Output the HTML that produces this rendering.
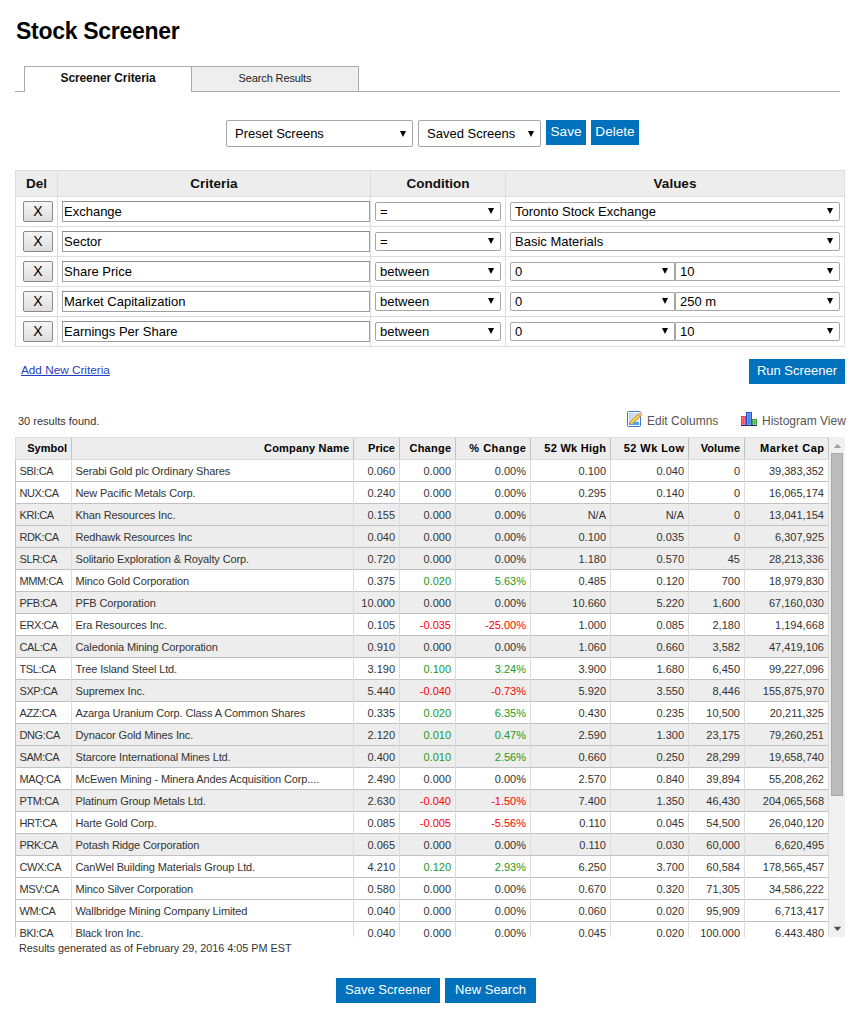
<!DOCTYPE html>
<html><head><meta charset="utf-8">
<style>
*{box-sizing:border-box}
html,body{margin:0;padding:0;background:#fff;width:866px;height:1022px;overflow:hidden;position:relative;font-family:"Liberation Sans",sans-serif}
.a{position:absolute}
h1{position:absolute;left:16px;top:18px;margin:0;font-size:23px;font-weight:bold;color:#000;line-height:26px;letter-spacing:-0.3px}
.tabline{left:15px;top:91px;width:825px;height:1px;background:#aaa}
.tab1{left:24px;top:66px;width:168px;height:26px;border:1px solid #aaa;border-bottom:none;background:#fff;font-size:12px;letter-spacing:-0.1px;font-weight:bold;text-align:center;line-height:22px;color:#111}
.tab2{left:191px;top:66px;width:168px;height:26px;border:1px solid #aaa;background:#eee;font-size:11px;letter-spacing:-0.12px;text-align:center;line-height:22px;color:#222}
.sel{position:absolute;border:1px solid #a6a6a6;border-radius:2px;background:#fff;font-size:13px;color:#000;white-space:nowrap;overflow:hidden}
.sel .arr{position:absolute;width:0;height:0;border-left:3.5px solid transparent;border-right:3.5px solid transparent;border-top:6px solid #000}
.btn{position:absolute;background:#0071bc;color:#fff;font-size:13px;text-align:center;white-space:nowrap}
.ct{border:1px solid #ddd;background:#fff}
.cth{background:#ededed;border-bottom:1px solid #ddd;height:26px}
.cvl{width:1px;background:#ddd}
.chl{left:16px;width:828px;height:1px;background:#ddd}
.chd{top:171px;height:25px;line-height:26px;text-align:center;font-size:13.5px;font-weight:bold;color:#111}
.xb{left:23px;width:30px;height:21px;border:1px solid #8a8a8a;border-radius:2px;background:linear-gradient(#f6f6f6,#dddddd);font-size:14px;text-align:center;line-height:19px;color:#000}
.inp{left:62px;width:308px;height:21px;border:1px solid #a0a0a0;border-top-color:#8c8c8c;background:#fff;font-size:13px;line-height:19px;padding-left:1px;color:#000}
.cs{height:19px;line-height:17px;padding-left:4px}
.cs .arr{top:5px}
.rt{left:15px;top:437px;width:814px;height:500px;overflow:hidden;font-size:11px;color:#333}
.rh{left:0;top:0;width:814px;height:23px;background:#ededed;border-top:1px solid #dcdcdc;border-left:1px solid #dcdcdc;border-bottom:1px solid #d9d9d9}
.hc{top:1px;height:21px;line-height:21px;font-weight:bold;color:#000;text-align:right;padding-right:4px;white-space:nowrap}
.hvl{top:1px;width:1px;height:21px;background:#c2c2c2}
.rw{left:0;width:814px;height:22px;border-bottom:1px solid #c1c1c1;background:#fff}
.blb{left:0;top:23px;width:1px;height:480px;background:#c4c4c4}
.rw.g{background:#ededed}
.c{top:1px;height:21px;line-height:21px;white-space:nowrap;overflow:hidden;padding:0 4px}
.c.tl{padding-left:3.5px}
.sym{letter-spacing:-0.4px}.nm{letter-spacing:-0.12px}
.tl{text-align:left}.tr{text-align:right}
.gr{color:#229922}.rd{color:#ff0000}
.bvl{top:23px;width:1px;height:480px;background:#dcdcdc}
.sb{left:829px;top:437px;width:16px;height:500px;background:#f0f0f0}
.sbu{left:5px;top:7px;width:0;height:0;border-left:3.7px solid transparent;border-right:3.7px solid transparent;border-bottom:4px solid #a0a0a0}
.sbt{left:2px;top:16px;width:12px;height:343px;background:#bcbcbc;border:1px solid #a8a8a8}
.sbd{left:5px;top:490px;width:0;height:0;border-left:3.7px solid transparent;border-right:3.7px solid transparent;border-top:4px solid #505050}
.lnk{left:21px;top:363px;font-size:11.75px;color:#1f3fbf;text-decoration:underline;white-space:nowrap}
.inf{font-size:11px;color:#333;white-space:nowrap}
.tool{font-size:12px;color:#555;white-space:nowrap}
</style></head><body>
<h1>Stock Screener</h1>
<div class="a tabline"></div>
<div class="a tab1">Screener Criteria</div>
<div class="a tab2">Search Results</div>

<div class="sel" style="left:226px;top:120px;width:187px;height:27px;line-height:25px;padding-left:8px">Preset Screens<div class="arr" style="left:173px;top:10px"></div></div>
<div class="sel" style="left:418px;top:120px;width:123px;height:27px;line-height:25px;padding-left:8px">Saved Screens<div class="arr" style="left:109px;top:10px"></div></div>
<div class="btn" style="left:546px;top:120px;width:40px;height:25px;line-height:24px;font-size:13.6px">Save</div>
<div class="btn" style="left:591px;top:120px;width:48px;height:25px;line-height:24px;font-size:13.6px">Delete</div>

<div class="a ct" style="left:15px;top:170px;width:830px;height:177px"></div>
<div class="a cth" style="left:16px;top:171px;width:828px"></div>
<div class="a cvl" style="left:57px;top:171px;height:175px"></div>
<div class="a cvl" style="left:370px;top:171px;height:175px"></div>
<div class="a cvl" style="left:505px;top:171px;height:175px"></div>
<div class="a chl" style="top:226px"></div>
<div class="a chl" style="top:256px"></div>
<div class="a chl" style="top:286px"></div>
<div class="a chl" style="top:316px"></div>
<div class="a chd" style="left:16px;width:41px">Del</div>
<div class="a chd" style="left:58px;width:312px">Criteria</div>
<div class="a chd" style="left:371px;width:134px">Condition</div>
<div class="a chd" style="left:506px;width:338px">Values</div>
<div class="a xb" style="top:201px">X</div>
<div class="a inp" style="top:201px">Exchange</div>
<div class="sel cs" style="left:375px;top:202px;width:126px">=<div class="arr" style="left:112px"></div></div>
<div class="sel cs" style="left:510px;top:202px;width:330px">Toronto Stock Exchange<div class="arr" style="left:316px"></div></div>
<div class="a xb" style="top:231px">X</div>
<div class="a inp" style="top:231px">Sector</div>
<div class="sel cs" style="left:375px;top:232px;width:126px">=<div class="arr" style="left:112px"></div></div>
<div class="sel cs" style="left:510px;top:232px;width:330px">Basic Materials<div class="arr" style="left:316px"></div></div>
<div class="a xb" style="top:261px">X</div>
<div class="a inp" style="top:261px">Share Price</div>
<div class="sel cs" style="left:375px;top:262px;width:126px">between<div class="arr" style="left:112px"></div></div>
<div class="sel cs" style="left:510px;top:262px;width:165px;border-radius:2px 0 0 2px">0<div class="arr" style="left:151px"></div></div>
<div class="sel cs" style="left:675px;top:262px;width:165px;border-radius:0 2px 2px 0">10<div class="arr" style="left:151px"></div></div>
<div class="a xb" style="top:291px">X</div>
<div class="a inp" style="top:291px">Market Capitalization</div>
<div class="sel cs" style="left:375px;top:292px;width:126px">between<div class="arr" style="left:112px"></div></div>
<div class="sel cs" style="left:510px;top:292px;width:165px;border-radius:2px 0 0 2px">0<div class="arr" style="left:151px"></div></div>
<div class="sel cs" style="left:675px;top:292px;width:165px;border-radius:0 2px 2px 0">250 m<div class="arr" style="left:151px"></div></div>
<div class="a xb" style="top:321px">X</div>
<div class="a inp" style="top:321px">Earnings Per Share</div>
<div class="sel cs" style="left:375px;top:322px;width:126px">between<div class="arr" style="left:112px"></div></div>
<div class="sel cs" style="left:510px;top:322px;width:165px;border-radius:2px 0 0 2px">0<div class="arr" style="left:151px"></div></div>
<div class="sel cs" style="left:675px;top:322px;width:165px;border-radius:0 2px 2px 0">10<div class="arr" style="left:151px"></div></div>

<div class="a lnk">Add New Criteria</div>
<div class="btn" style="left:749px;top:359px;width:96px;height:25px;line-height:24px">Run Screener</div>
<div class="a inf" style="left:18px;top:415px">30 results found.</div>
<svg class="a" style="left:626px;top:410px" width="18" height="18" viewBox="0 0 18 18">
<defs><linearGradient id="dg" x1="0" y1="0" x2="1" y2="1"><stop offset="0" stop-color="#b9d2f6"/><stop offset="1" stop-color="#e8f1fd"/></linearGradient></defs>
<rect x="1.5" y="1.5" width="13" height="15" rx="1" fill="#fff" stroke="#3f76d2" stroke-width="1"/>
<rect x="3" y="3" width="10" height="12" fill="url(#dg)"/>
<rect x="3" y="12" width="10" height="3" fill="#4aa6ef"/>
<line x1="5.2" y1="12.8" x2="14" y2="4.6" stroke="#cf9236" stroke-width="3.8"/>
<line x1="5.6" y1="12.4" x2="13.6" y2="5" stroke="#f0d040" stroke-width="2.2"/>
<line x1="7" y1="11" x2="12.4" y2="6" stroke="#fff8c0" stroke-width="0.7" stroke-dasharray="1 1"/>
<circle cx="14.3" cy="4.4" r="1.7" fill="#f3c89a" stroke="#d09040" stroke-width="0.6"/>
<polygon points="3.6,14.4 4.2,11.4 6.8,13.8" fill="#f7d8b0"/>
<polygon points="3.6,14.4 4.0,12.9 5.2,14.0" fill="#5a3010"/>
</svg>
<div class="a tool" style="left:647px;top:414px">Edit Columns</div>
<svg class="a" style="left:741px;top:412px" width="16" height="14" viewBox="0 0 16 14">
<rect x="0.5" y="4.5" width="4" height="9" fill="#ff9c9c" stroke="#ef3c3c"/>
<rect x="1.5" y="5.5" width="2" height="7" fill="#ff4a4a"/>
<rect x="5.5" y="0.5" width="5" height="13" fill="#8fb6f2" stroke="#1f4fe0"/>
<rect x="6.5" y="1.5" width="3" height="11" fill="#4a86e4"/>
<rect x="11.5" y="7.5" width="4" height="6" fill="#b2e0a4" stroke="#3e9a3e"/>
<rect x="12.5" y="8.5" width="2" height="4" fill="#5aaa5a"/>
<rect x="0" y="13" width="16" height="1" fill="#1a2a7a"/>
</svg>
<div class="a tool" style="left:762px;top:414px">Histogram View</div>
<div class="a rt">
<div class="a rh"></div>
<div class="a hc" style="left:1px;width:55px">Symbol</div>
<div class="a hc" style="left:57px;width:281px;letter-spacing:0.16px;padding-right:3.84px">Company Name</div>
<div class="a hc" style="left:339px;width:45px">Price</div>
<div class="a hc" style="left:385px;width:55px;letter-spacing:0.24px;padding-right:3.76px">Change</div>
<div class="a hc" style="left:441px;width:74px;letter-spacing:0.5px;padding-right:3.50px">% Change</div>
<div class="a hc" style="left:516px;width:79px;letter-spacing:0.27px;padding-right:3.73px">52 Wk High</div>
<div class="a hc" style="left:596px;width:77px;letter-spacing:0.42px;padding-right:3.58px">52 Wk Low</div>
<div class="a hc" style="left:674px;width:55px;letter-spacing:0.08px;padding-right:3.92px">Volume</div>
<div class="a hc" style="left:730px;width:83px;letter-spacing:0.52px;padding-right:3.48px">Market Cap</div>
<div class="a hvl" style="left:56px"></div>
<div class="a hvl" style="left:338px"></div>
<div class="a hvl" style="left:384px"></div>
<div class="a hvl" style="left:440px"></div>
<div class="a hvl" style="left:515px"></div>
<div class="a hvl" style="left:595px"></div>
<div class="a hvl" style="left:673px"></div>
<div class="a hvl" style="left:729px"></div>
<div class="a hvl" style="left:813px"></div>
<div class="a rw" style="top:23px">
<div class="a c tl sym" style="left:1px;width:55px">SBI:CA</div>
<div class="a c tl nm" style="left:57px;width:281px">Serabi Gold plc Ordinary Shares</div>
<div class="a c tr" style="left:339px;width:45px">0.060</div>
<div class="a c tr" style="left:385px;width:55px">0.000</div>
<div class="a c tr" style="left:441px;width:74px">0.00%</div>
<div class="a c tr" style="left:516px;width:79px">0.100</div>
<div class="a c tr" style="left:596px;width:77px">0.040</div>
<div class="a c tr" style="left:674px;width:55px">0</div>
<div class="a c tr" style="left:730px;width:83px">39,383,352</div>
</div>
<div class="a rw" style="top:45px">
<div class="a c tl sym" style="left:1px;width:55px">NUX:CA</div>
<div class="a c tl nm" style="left:57px;width:281px">New Pacific Metals Corp.</div>
<div class="a c tr" style="left:339px;width:45px">0.240</div>
<div class="a c tr" style="left:385px;width:55px">0.000</div>
<div class="a c tr" style="left:441px;width:74px">0.00%</div>
<div class="a c tr" style="left:516px;width:79px">0.295</div>
<div class="a c tr" style="left:596px;width:77px">0.140</div>
<div class="a c tr" style="left:674px;width:55px">0</div>
<div class="a c tr" style="left:730px;width:83px">16,065,174</div>
</div>
<div class="a rw g" style="top:67px">
<div class="a c tl sym" style="left:1px;width:55px">KRI:CA</div>
<div class="a c tl nm" style="left:57px;width:281px">Khan Resources Inc.</div>
<div class="a c tr" style="left:339px;width:45px">0.155</div>
<div class="a c tr" style="left:385px;width:55px">0.000</div>
<div class="a c tr" style="left:441px;width:74px">0.00%</div>
<div class="a c tr" style="left:516px;width:79px">N/A</div>
<div class="a c tr" style="left:596px;width:77px">N/A</div>
<div class="a c tr" style="left:674px;width:55px">0</div>
<div class="a c tr" style="left:730px;width:83px">13,041,154</div>
</div>
<div class="a rw g" style="top:89px">
<div class="a c tl sym" style="left:1px;width:55px">RDK:CA</div>
<div class="a c tl nm" style="left:57px;width:281px">Redhawk Resources Inc</div>
<div class="a c tr" style="left:339px;width:45px">0.040</div>
<div class="a c tr" style="left:385px;width:55px">0.000</div>
<div class="a c tr" style="left:441px;width:74px">0.00%</div>
<div class="a c tr" style="left:516px;width:79px">0.100</div>
<div class="a c tr" style="left:596px;width:77px">0.035</div>
<div class="a c tr" style="left:674px;width:55px">0</div>
<div class="a c tr" style="left:730px;width:83px">6,307,925</div>
</div>
<div class="a rw g" style="top:111px">
<div class="a c tl sym" style="left:1px;width:55px">SLR:CA</div>
<div class="a c tl nm" style="left:57px;width:281px">Solitario Exploration &amp; Royalty Corp.</div>
<div class="a c tr" style="left:339px;width:45px">0.720</div>
<div class="a c tr" style="left:385px;width:55px">0.000</div>
<div class="a c tr" style="left:441px;width:74px">0.00%</div>
<div class="a c tr" style="left:516px;width:79px">1.180</div>
<div class="a c tr" style="left:596px;width:77px">0.570</div>
<div class="a c tr" style="left:674px;width:55px">45</div>
<div class="a c tr" style="left:730px;width:83px">28,213,336</div>
</div>
<div class="a rw" style="top:133px">
<div class="a c tl sym" style="left:1px;width:55px">MMM:CA</div>
<div class="a c tl nm" style="left:57px;width:281px">Minco Gold Corporation</div>
<div class="a c tr" style="left:339px;width:45px">0.375</div>
<div class="a c tr gr" style="left:385px;width:55px">0.020</div>
<div class="a c tr gr" style="left:441px;width:74px">5.63%</div>
<div class="a c tr" style="left:516px;width:79px">0.485</div>
<div class="a c tr" style="left:596px;width:77px">0.120</div>
<div class="a c tr" style="left:674px;width:55px">700</div>
<div class="a c tr" style="left:730px;width:83px">18,979,830</div>
</div>
<div class="a rw g" style="top:155px">
<div class="a c tl sym" style="left:1px;width:55px">PFB:CA</div>
<div class="a c tl nm" style="left:57px;width:281px">PFB Corporation</div>
<div class="a c tr" style="left:339px;width:45px">10.000</div>
<div class="a c tr" style="left:385px;width:55px">0.000</div>
<div class="a c tr" style="left:441px;width:74px">0.00%</div>
<div class="a c tr" style="left:516px;width:79px">10.660</div>
<div class="a c tr" style="left:596px;width:77px">5.220</div>
<div class="a c tr" style="left:674px;width:55px">1,600</div>
<div class="a c tr" style="left:730px;width:83px">67,160,030</div>
</div>
<div class="a rw" style="top:177px">
<div class="a c tl sym" style="left:1px;width:55px">ERX:CA</div>
<div class="a c tl nm" style="left:57px;width:281px">Era Resources Inc.</div>
<div class="a c tr" style="left:339px;width:45px">0.105</div>
<div class="a c tr rd" style="left:385px;width:55px">-0.035</div>
<div class="a c tr rd" style="left:441px;width:74px">-25.00%</div>
<div class="a c tr" style="left:516px;width:79px">1.000</div>
<div class="a c tr" style="left:596px;width:77px">0.085</div>
<div class="a c tr" style="left:674px;width:55px">2,180</div>
<div class="a c tr" style="left:730px;width:83px">1,194,668</div>
</div>
<div class="a rw g" style="top:199px">
<div class="a c tl sym" style="left:1px;width:55px">CAL:CA</div>
<div class="a c tl nm" style="left:57px;width:281px">Caledonia Mining Corporation</div>
<div class="a c tr" style="left:339px;width:45px">0.910</div>
<div class="a c tr" style="left:385px;width:55px">0.000</div>
<div class="a c tr" style="left:441px;width:74px">0.00%</div>
<div class="a c tr" style="left:516px;width:79px">1.060</div>
<div class="a c tr" style="left:596px;width:77px">0.660</div>
<div class="a c tr" style="left:674px;width:55px">3,582</div>
<div class="a c tr" style="left:730px;width:83px">47,419,106</div>
</div>
<div class="a rw" style="top:221px">
<div class="a c tl sym" style="left:1px;width:55px">TSL:CA</div>
<div class="a c tl nm" style="left:57px;width:281px">Tree Island Steel Ltd.</div>
<div class="a c tr" style="left:339px;width:45px">3.190</div>
<div class="a c tr gr" style="left:385px;width:55px">0.100</div>
<div class="a c tr gr" style="left:441px;width:74px">3.24%</div>
<div class="a c tr" style="left:516px;width:79px">3.900</div>
<div class="a c tr" style="left:596px;width:77px">1.680</div>
<div class="a c tr" style="left:674px;width:55px">6,450</div>
<div class="a c tr" style="left:730px;width:83px">99,227,096</div>
</div>
<div class="a rw g" style="top:243px">
<div class="a c tl sym" style="left:1px;width:55px">SXP:CA</div>
<div class="a c tl nm" style="left:57px;width:281px">Supremex Inc.</div>
<div class="a c tr" style="left:339px;width:45px">5.440</div>
<div class="a c tr rd" style="left:385px;width:55px">-0.040</div>
<div class="a c tr rd" style="left:441px;width:74px">-0.73%</div>
<div class="a c tr" style="left:516px;width:79px">5.920</div>
<div class="a c tr" style="left:596px;width:77px">3.550</div>
<div class="a c tr" style="left:674px;width:55px">8,446</div>
<div class="a c tr" style="left:730px;width:83px">155,875,970</div>
</div>
<div class="a rw" style="top:265px">
<div class="a c tl sym" style="left:1px;width:55px">AZZ:CA</div>
<div class="a c tl nm" style="left:57px;width:281px">Azarga Uranium Corp. Class A Common Shares</div>
<div class="a c tr" style="left:339px;width:45px">0.335</div>
<div class="a c tr gr" style="left:385px;width:55px">0.020</div>
<div class="a c tr gr" style="left:441px;width:74px">6.35%</div>
<div class="a c tr" style="left:516px;width:79px">0.430</div>
<div class="a c tr" style="left:596px;width:77px">0.235</div>
<div class="a c tr" style="left:674px;width:55px">10,500</div>
<div class="a c tr" style="left:730px;width:83px">20,211,325</div>
</div>
<div class="a rw g" style="top:287px">
<div class="a c tl sym" style="left:1px;width:55px">DNG:CA</div>
<div class="a c tl nm" style="left:57px;width:281px">Dynacor Gold Mines Inc.</div>
<div class="a c tr" style="left:339px;width:45px">2.120</div>
<div class="a c tr gr" style="left:385px;width:55px">0.010</div>
<div class="a c tr gr" style="left:441px;width:74px">0.47%</div>
<div class="a c tr" style="left:516px;width:79px">2.590</div>
<div class="a c tr" style="left:596px;width:77px">1.300</div>
<div class="a c tr" style="left:674px;width:55px">23,175</div>
<div class="a c tr" style="left:730px;width:83px">79,260,251</div>
</div>
<div class="a rw g" style="top:309px">
<div class="a c tl sym" style="left:1px;width:55px">SAM:CA</div>
<div class="a c tl nm" style="left:57px;width:281px">Starcore International Mines Ltd.</div>
<div class="a c tr" style="left:339px;width:45px">0.400</div>
<div class="a c tr gr" style="left:385px;width:55px">0.010</div>
<div class="a c tr gr" style="left:441px;width:74px">2.56%</div>
<div class="a c tr" style="left:516px;width:79px">0.660</div>
<div class="a c tr" style="left:596px;width:77px">0.250</div>
<div class="a c tr" style="left:674px;width:55px">28,299</div>
<div class="a c tr" style="left:730px;width:83px">19,658,740</div>
</div>
<div class="a rw" style="top:331px">
<div class="a c tl sym" style="left:1px;width:55px">MAQ:CA</div>
<div class="a c tl nm" style="left:57px;width:281px">McEwen Mining - Minera Andes Acquisition Corp....</div>
<div class="a c tr" style="left:339px;width:45px">2.490</div>
<div class="a c tr" style="left:385px;width:55px">0.000</div>
<div class="a c tr" style="left:441px;width:74px">0.00%</div>
<div class="a c tr" style="left:516px;width:79px">2.570</div>
<div class="a c tr" style="left:596px;width:77px">0.840</div>
<div class="a c tr" style="left:674px;width:55px">39,894</div>
<div class="a c tr" style="left:730px;width:83px">55,208,262</div>
</div>
<div class="a rw g" style="top:353px">
<div class="a c tl sym" style="left:1px;width:55px">PTM:CA</div>
<div class="a c tl nm" style="left:57px;width:281px">Platinum Group Metals Ltd.</div>
<div class="a c tr" style="left:339px;width:45px">2.630</div>
<div class="a c tr rd" style="left:385px;width:55px">-0.040</div>
<div class="a c tr rd" style="left:441px;width:74px">-1.50%</div>
<div class="a c tr" style="left:516px;width:79px">7.400</div>
<div class="a c tr" style="left:596px;width:77px">1.350</div>
<div class="a c tr" style="left:674px;width:55px">46,430</div>
<div class="a c tr" style="left:730px;width:83px">204,065,568</div>
</div>
<div class="a rw" style="top:375px">
<div class="a c tl sym" style="left:1px;width:55px">HRT:CA</div>
<div class="a c tl nm" style="left:57px;width:281px">Harte Gold Corp.</div>
<div class="a c tr" style="left:339px;width:45px">0.085</div>
<div class="a c tr rd" style="left:385px;width:55px">-0.005</div>
<div class="a c tr rd" style="left:441px;width:74px">-5.56%</div>
<div class="a c tr" style="left:516px;width:79px">0.110</div>
<div class="a c tr" style="left:596px;width:77px">0.045</div>
<div class="a c tr" style="left:674px;width:55px">54,500</div>
<div class="a c tr" style="left:730px;width:83px">26,040,120</div>
</div>
<div class="a rw g" style="top:397px">
<div class="a c tl sym" style="left:1px;width:55px">PRK:CA</div>
<div class="a c tl nm" style="left:57px;width:281px">Potash Ridge Corporation</div>
<div class="a c tr" style="left:339px;width:45px">0.065</div>
<div class="a c tr" style="left:385px;width:55px">0.000</div>
<div class="a c tr" style="left:441px;width:74px">0.00%</div>
<div class="a c tr" style="left:516px;width:79px">0.110</div>
<div class="a c tr" style="left:596px;width:77px">0.030</div>
<div class="a c tr" style="left:674px;width:55px">60,000</div>
<div class="a c tr" style="left:730px;width:83px">6,620,495</div>
</div>
<div class="a rw" style="top:419px">
<div class="a c tl sym" style="left:1px;width:55px">CWX:CA</div>
<div class="a c tl nm" style="left:57px;width:281px">CanWel Building Materials Group Ltd.</div>
<div class="a c tr" style="left:339px;width:45px">4.210</div>
<div class="a c tr gr" style="left:385px;width:55px">0.120</div>
<div class="a c tr gr" style="left:441px;width:74px">2.93%</div>
<div class="a c tr" style="left:516px;width:79px">6.250</div>
<div class="a c tr" style="left:596px;width:77px">3.700</div>
<div class="a c tr" style="left:674px;width:55px">60,584</div>
<div class="a c tr" style="left:730px;width:83px">178,565,457</div>
</div>
<div class="a rw" style="top:441px">
<div class="a c tl sym" style="left:1px;width:55px">MSV:CA</div>
<div class="a c tl nm" style="left:57px;width:281px">Minco Silver Corporation</div>
<div class="a c tr" style="left:339px;width:45px">0.580</div>
<div class="a c tr" style="left:385px;width:55px">0.000</div>
<div class="a c tr" style="left:441px;width:74px">0.00%</div>
<div class="a c tr" style="left:516px;width:79px">0.670</div>
<div class="a c tr" style="left:596px;width:77px">0.320</div>
<div class="a c tr" style="left:674px;width:55px">71,305</div>
<div class="a c tr" style="left:730px;width:83px">34,586,222</div>
</div>
<div class="a rw" style="top:463px">
<div class="a c tl sym" style="left:1px;width:55px">WM:CA</div>
<div class="a c tl nm" style="left:57px;width:281px">Wallbridge Mining Company Limited</div>
<div class="a c tr" style="left:339px;width:45px">0.040</div>
<div class="a c tr" style="left:385px;width:55px">0.000</div>
<div class="a c tr" style="left:441px;width:74px">0.00%</div>
<div class="a c tr" style="left:516px;width:79px">0.060</div>
<div class="a c tr" style="left:596px;width:77px">0.020</div>
<div class="a c tr" style="left:674px;width:55px">95,909</div>
<div class="a c tr" style="left:730px;width:83px">6,713,417</div>
</div>
<div class="a rw" style="top:485px">
<div class="a c tl sym" style="left:1px;width:55px">BKI:CA</div>
<div class="a c tl nm" style="left:57px;width:281px">Black Iron Inc.</div>
<div class="a c tr" style="left:339px;width:45px">0.040</div>
<div class="a c tr" style="left:385px;width:55px">0.000</div>
<div class="a c tr" style="left:441px;width:74px">0.00%</div>
<div class="a c tr" style="left:516px;width:79px">0.045</div>
<div class="a c tr" style="left:596px;width:77px">0.020</div>
<div class="a c tr" style="left:674px;width:55px">100,000</div>
<div class="a c tr" style="left:730px;width:83px">6,443,480</div>
</div>
<div class="a blb"></div>
<div class="a bvl" style="left:56px"></div>
<div class="a bvl" style="left:338px"></div>
<div class="a bvl" style="left:384px"></div>
<div class="a bvl" style="left:440px"></div>
<div class="a bvl" style="left:515px"></div>
<div class="a bvl" style="left:595px"></div>
<div class="a bvl" style="left:673px"></div>
<div class="a bvl" style="left:729px"></div>
<div class="a bvl" style="left:813px"></div>
</div>
<div class="a sb"><svg class="a" style="left:0;top:0" width="16" height="500"><polygon points="4.8,11 12.2,11 8.5,6.8" fill="#a0a0a0"/><polygon points="4.8,489.8 12.2,489.8 8.5,494" fill="#505050"/></svg><div class="a sbt"></div></div>
<div class="a inf" style="left:19px;top:942px;font-size:10.8px">Results generated as of February 29, 2016 4:05 PM EST</div>
<div class="btn" style="left:336px;top:978px;width:104px;height:25px;line-height:24px">Save Screener</div>
<div class="btn" style="left:445px;top:978px;width:91px;height:25px;line-height:24px">New Search</div>

</body></html>
